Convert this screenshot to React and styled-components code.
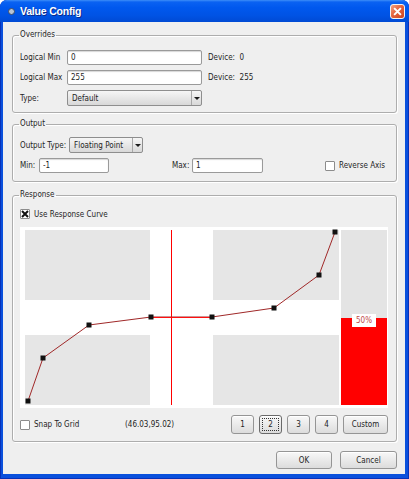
import React from "react";
import styled, { createGlobalStyle } from "styled-components";

const GlobalStyle = createGlobalStyle`
  html, body {
    margin: 0;
    padding: 0;
    background: #ffffff;
  }
  body {
    font-family: "DejaVu Sans Condensed", "DejaVu Sans", sans-serif;
    font-size: 8px;
    color: #1e1e1e;
  }
`;

const Window = styled.div`
  width: 409px;
  height: 479px;
  display: flex;
  flex-direction: column;
  background: #0a50dc;
  border-radius: 7px 7px 0 0;
  box-shadow: inset 0 0 0 1px #0831b9;
  overflow: hidden;
`;

const TitleBar = styled.div`
  flex: none;
  height: 22px;
  display: flex;
  align-items: center;
  padding: 0 4px 0 8px;
  background: linear-gradient(
    #3d8ef8 0,
    #0a62f2 2px,
    #0058ee 35%,
    #0053e4 70%,
    #004ad4 100%
  );
`;

const Title = styled.span`
  margin-left: 5px;
  font-family: "Liberation Sans", sans-serif;
  font-weight: bold;
  font-size: 10.5px;
  letter-spacing: -0.2px;
  color: #ffffff;
  text-shadow: 1px 1px 0 #0a2a8a;
`;

const CloseButton = styled.div`
  margin-left: auto;
  width: 15px;
  height: 15px;
  box-sizing: border-box;
  border: 1px solid #f4f4f4;
  border-radius: 3px;
  background: linear-gradient(135deg, #f4a282 0%, #e4643e 45%, #cc4420 100%);
  display: flex;
  align-items: center;
  justify-content: center;
`;

const Client = styled.div`
  flex: 1;
  margin: 0 4px 5px 3px;
  padding: 8px 8px 5px 9px;
  background: #efefef;
  display: flex;
  flex-direction: column;
`;

const Group = styled.fieldset`
  margin: ${(p) => p.$top || 0}px 0 0 0;
  padding: ${(p) => p.$pad};
  border: 1px solid #adadad;
  border-radius: 3px;
  box-shadow: 1px 1px 0 #ffffff, inset 1px 1px 0 #ffffff;
  min-width: 0;
`;

const Legend = styled.legend`
  padding: 0 1px;
  margin-left: -1px;
  line-height: 10px;
  color: #1e1e1e;
`;

const OverrideGrid = styled.div`
  display: grid;
  grid-template-columns: 47px 135px auto;
  grid-template-rows: 15px 15px 16px;
  row-gap: 5px;
  align-items: center;
`;

const Label = styled.span`
  white-space: nowrap;
  width: ${(p) => (p.$width ? `${p.$width}px` : "auto")};
  margin-left: ${(p) => p.$indent || 0}px;
  flex: none;
`;

const Field = styled.input`
  box-sizing: border-box;
  width: ${(p) => (p.$width ? `${p.$width}px` : "100%")};
  height: 15px;
  margin: 0;
  padding: 0 3px;
  border: 1px solid #9a9a9a;
  border-radius: 2px;
  background: #ffffff;
  box-shadow: inset 0 1px 1px #d8d8d8;
  font: inherit;
  color: #1e1e1e;
  outline: none;
`;

const Combo = styled.div`
  box-sizing: border-box;
  width: ${(p) => p.$width}px;
  height: 16px;
  display: flex;
  align-items: stretch;
  border: 1px solid #8e8e8e;
  border-radius: 2px;
  background: linear-gradient(#f6f6f6, #d8d8d8);
`;

const ComboText = styled.span`
  flex: 1;
  display: flex;
  align-items: center;
  padding-left: 4px;
`;

const ComboArrow = styled.span`
  width: 9px;
  flex: none;
  border-left: 1px solid #a8a8a8;
  display: flex;
  align-items: center;
  justify-content: center;
  &::after {
    content: "";
    border-left: 3px solid transparent;
    border-right: 3px solid transparent;
    border-top: 3px solid #1a1a1a;
  }
`;

const Row = styled.div`
  display: flex;
  align-items: center;
`;

const OutputGrid = styled.div`
  display: grid;
  grid-template-columns: 152px 153px auto;
  align-items: center;
  margin-top: 5px;
`;

const Check = styled.label`
  display: flex;
  align-items: center;
  gap: 4px;
  white-space: nowrap;
  width: ${(p) => (p.$width ? `${p.$width}px` : "auto")};
  flex: none;
`;

const Box = styled.span`
  width: 10px;
  height: 10px;
  box-sizing: border-box;
  border: 1px solid #8c8c8c;
  border-radius: 1px;
  background: #ffffff;
  display: flex;
  align-items: center;
  justify-content: center;
`;

const Graph = styled.div`
  position: relative;
  margin-top: 8px;
  height: 181px;
  box-sizing: border-box;
  padding: 3px 1px 3px 5px;
  background: #ffffff;
  display: grid;
  grid-template-columns: 125px 63px 126px 2px 46px;
  grid-template-rows: 70px 35px 70px;
`;

const Zone = styled.div`
  grid-column: ${(p) => p.$col};
  grid-row: ${(p) => p.$row};
  background: #e6e6e6;
`;

const Bar = styled.div`
  grid-column: 5;
  grid-row: 1 / 4;
  background: #e4e4e4;
  display: flex;
  flex-direction: column;
  justify-content: flex-end;
`;

const Fill = styled.div`
  position: relative;
  background: #ff0000;
`;

const Percent = styled.span`
  position: absolute;
  top: -4px;
  left: 11px;
  width: 24px;
  height: 13px;
  background: #ffffff;
  color: #c04848;
  display: flex;
  align-items: center;
  justify-content: center;
`;

const Overlay = styled.svg`
  position: absolute;
  left: 0;
  top: 0;
  pointer-events: none;
`;

const BottomRow = styled.div`
  display: flex;
  align-items: center;
  margin-top: 7px;
`;

const Buttons = styled.div`
  margin-left: auto;
  display: flex;
  gap: ${(p) => p.$gap}px;
`;

const Button = styled.button`
  box-sizing: border-box;
  width: ${(p) => p.$width}px;
  height: ${(p) => p.$height}px;
  margin: 0;
  padding: 0;
  border: 1px solid ${(p) => (p.$focused ? "#6a6a6a" : "#959595")};
  border-radius: 3px;
  background: linear-gradient(#f8f8f8, #dcdcdc);
  box-shadow: inset 0 1px 0 #ffffff;
  font: inherit;
  color: #1e1e1e;
  position: relative;
  ${(p) =>
    p.$focused &&
    `
    &::after {
      content: "";
      position: absolute;
      inset: 2px;
      border: 1px dotted #333;
    }
  `}
`;

const Footer = styled.div`
  margin-top: auto;
  display: flex;
  justify-content: flex-end;
  gap: 8px;
`;

const points = [
  [8, 174],
  [23, 131],
  [69, 98],
  [131, 90],
  [192, 90],
  [254, 81],
  [299, 48],
  [315, 5],
];

const XMark = ({ size = 8, width = 2, color = "#111" }) => (
  <svg width={size} height={size} viewBox="0 0 8 8">
    <path d="M1 1L7 7M7 1L1 7" stroke={color} strokeWidth={width} />
  </svg>
);

const Curve = () => (
  <Overlay width="368" height="181" viewBox="0 0 368 181">
    <rect x="151" y="3" width="1" height="175" fill="#ff0000" shapeRendering="crispEdges" />
    <polyline
      points={points.map((p) => p.join(",")).join(" ")}
      fill="none"
      stroke="#a02828"
      strokeWidth="1"
    />
    <rect x="131" y="90" width="61" height="1" fill="#ff1010" shapeRendering="crispEdges" />
    {points.map(([x, y], i) => (
      <rect key={i} x={x - 2.5} y={y - 2.5} width="5" height="5" fill="#111" />
    ))}
  </Overlay>
);

export default function App() {
  const response = 50;
  return (
    <>
      <GlobalStyle />
      <Window>
        <TitleBar>
          <svg width="7" height="7" viewBox="0 0 7 7">
            <circle cx="3.5" cy="3.5" r="3" fill="#b8c4d4" stroke="#3a4a66" strokeWidth="1" />
          </svg>
          <Title>Value Config</Title>
          <CloseButton>
            <XMark size={9} width={1.8} color="#ffffff" />
          </CloseButton>
        </TitleBar>
        <Client>
          <Group $pad="10px 8px 6px 7px">
            <Legend>Overrides</Legend>
            <OverrideGrid>
              <Label>Logical Min</Label>
              <Field defaultValue="0" readOnly />
              <Label $indent={6}>Device:&nbsp; 0</Label>
              <Label>Logical Max</Label>
              <Field defaultValue="255" readOnly />
              <Label $indent={6}>Device:&nbsp; 255</Label>
              <Label>Type:</Label>
              <Combo $width={135}>
                <ComboText>Default</ComboText>
                <ComboArrow />
              </Combo>
            </OverrideGrid>
          </Group>

          <Group $top={6} $pad="8px 8px 8px 7px">
            <Legend>Output</Legend>
            <Row>
              <Label $width={49}>Output Type:</Label>
              <Combo $width={74}>
                <ComboText>Floating Point</ComboText>
                <ComboArrow />
              </Combo>
            </Row>
            <OutputGrid>
              <Row>
                <Label $width={19}>Min:</Label>
                <Field $width={70} defaultValue="-1" readOnly />
              </Row>
              <Row>
                <Label $width={20}>Max:</Label>
                <Field $width={71} defaultValue="1" readOnly />
              </Row>
              <Check>
                <Box />
                Reverse Axis
              </Check>
            </OutputGrid>
          </Group>

          <Group $top={8} $pad="9px 8px 7px 7px">
            <Legend>Response</Legend>
            <Check>
              <Box>
                <XMark size={8} width={2} />
              </Box>
              Use Response Curve
            </Check>
            <Graph>
              <Zone $col={1} $row={1} />
              <Zone $col={3} $row={1} />
              <Zone $col={1} $row={3} />
              <Zone $col={3} $row={3} />
              <Bar>
                <Fill style={{ height: `${response}%` }}>
                  <Percent>{response}%</Percent>
                </Fill>
              </Bar>
              <Curve />
            </Graph>
            <BottomRow>
              <Check $width={105}>
                <Box />
                Snap To Grid
              </Check>
              <span>(46.03,95.02)</span>
              <Buttons $gap={5}>
                <Button $width={23} $height={19}>1</Button>
                <Button $width={23} $height={19} $focused>2</Button>
                <Button $width={23} $height={19}>3</Button>
                <Button $width={23} $height={19}>4</Button>
                <Button $width={45} $height={19}>Custom</Button>
              </Buttons>
            </BottomRow>
          </Group>

          <Footer>
            <Button $width={56} $height={18}>OK</Button>
            <Button $width={57} $height={18}>Cancel</Button>
          </Footer>
        </Client>
      </Window>
    </>
  );
}
